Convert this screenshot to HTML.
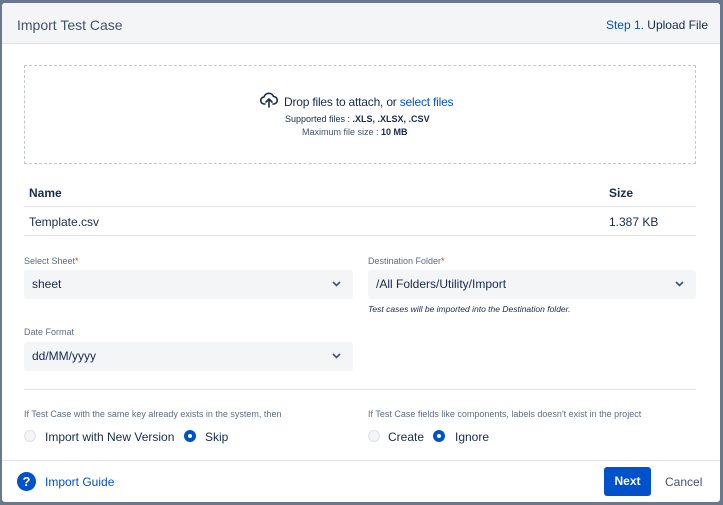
<!DOCTYPE html>
<html><head><meta charset="utf-8"><style>
*{margin:0;padding:0;box-sizing:border-box}
body{width:723px;height:505px;background:#6b778c;font-family:"Liberation Sans",sans-serif;color:#172b4d;position:relative;overflow:hidden}
.m{position:absolute;left:2px;top:3px;width:718px;height:499px;background:#fff;border-radius:3px;overflow:hidden}
.a{position:absolute;white-space:nowrap}
.hd{position:absolute;left:0;top:0;width:718px;height:41px;background:#f4f5f7;border-bottom:1px solid #dfe1e6}
.sel{position:absolute;height:29px;background:#f4f5f7;border-radius:3px;font-size:12px;line-height:29px;padding-left:8px;color:#172b4d}
.sel svg{position:absolute;right:12px;top:11px}
.lbl{font-size:9px;color:#5e6c84}
.r{position:absolute;width:12px;height:12px;border-radius:50%}
.ro{border:1.5px solid #dfe1e6;background:#f4f5f7}
.rs{background:#0052cc}
.rs:after{content:"";position:absolute;left:4px;top:4px;width:4px;height:4px;border-radius:50%;background:#fff}
</style></head><body>
<div class="m">
<div class="hd"></div>
<div class="a" style="left:15px;top:14px;font-size:14px;color:#42526e">Import Test Case</div>
<div class="a" style="right:12px;top:15px;font-size:12px;color:#172b4d"><span style="color:#0052cc">Step 1.</span> Upload File</div>
<div style="position:absolute;left:22px;top:62px;width:672px;height:99px;border:1px dashed #c1c7d0"></div>
<svg class="a" style="left:258px;top:89px" width="18" height="16" viewBox="0 0 18 16"><path d="M5 12H4.5a3.5 3.5 0 0 1-.5-7A5 5 0 0 1 13.5 4.5 3.5 3.5 0 0 1 13.5 12H13M9 15V7M6 10l3-3 3 3" fill="none" stroke="#172b4d" stroke-width="1.6" stroke-linecap="round" stroke-linejoin="round"/></svg>
<div class="a" style="left:282px;top:92px;font-size:12px;color:#172b4d;letter-spacing:-0.2px">Drop files to attach, or <span style="color:#0052cc">select files</span></div>
<div class="a" style="left:283px;top:111px;font-size:9px;color:#172b4d">Supported files : <b>.XLS, .XLSX, .CSV</b></div>
<div class="a" style="left:300px;top:124px;font-size:9px;color:#42526e">Maximum file size : <b style="color:#172b4d">10 MB</b></div>
<div class="a" style="left:27px;top:183px;font-size:12px;font-weight:bold">Name</div>
<div class="a" style="left:607px;top:183px;font-size:12px;font-weight:bold">Size</div>
<div style="position:absolute;left:22px;top:203px;width:672px;border-top:1px solid #dfe1e6"></div>
<div class="a" style="left:27px;top:212px;font-size:12px">Template.csv</div>
<div class="a" style="left:607px;top:212px;font-size:12px">1.387 KB</div>
<div style="position:absolute;left:22px;top:232px;width:672px;border-top:1px solid #dfe1e6"></div>
<div class="a lbl" style="left:22px;top:253px">Select Sheet<span style="color:#de350b">*</span></div>
<div class="a lbl" style="left:366px;top:253px">Destination Folder<span style="color:#de350b">*</span></div>
<div class="sel" style="left:22px;top:267px;width:329px">sheet<svg width="9" height="6"><path d="M1 1l3.5 3.5L8 1" fill="none" stroke="#42526e" stroke-width="1.6"/></svg></div>
<div class="sel" style="left:366px;top:267px;width:328px">/All Folders/Utility/Import<svg width="9" height="6"><path d="M1 1l3.5 3.5L8 1" fill="none" stroke="#42526e" stroke-width="1.6"/></svg></div>
<div class="a" style="left:366px;top:301px;font-size:8.5px;font-style:italic;color:#172b4d">Test cases will be imported into the Destination folder.</div>
<div class="a lbl" style="left:22px;top:324px">Date Format</div>
<div class="sel" style="left:22px;top:339px;width:329px">dd/MM/yyyy<svg width="9" height="6"><path d="M1 1l3.5 3.5L8 1" fill="none" stroke="#42526e" stroke-width="1.6"/></svg></div>
<div style="position:absolute;left:22px;top:386px;width:672px;border-top:1px solid #dfe1e6"></div>
<div class="a lbl" style="left:22px;top:406px">If Test Case with the same key already exists in the system, then</div>
<div class="a lbl" style="left:366px;top:406px">If Test Case fields like components, labels doesn't exist in the project</div>
<div class="r ro" style="left:22px;top:427px"></div>
<div class="a" style="left:43px;top:427px;font-size:12px">Import with New Version</div>
<div class="r rs" style="left:182px;top:427px"></div>
<div class="a" style="left:203px;top:427px;font-size:12px">Skip</div>
<div class="r ro" style="left:366px;top:427px"></div>
<div class="a" style="left:386px;top:427px;font-size:12px">Create</div>
<div class="r rs" style="left:431px;top:427px"></div>
<div class="a" style="left:453px;top:427px;font-size:12px">Ignore</div>
<div style="position:absolute;left:0;top:457px;width:718px;border-top:1px solid #dfe1e6"></div>
<div class="a" style="left:15px;top:469px;width:19px;height:19px;border-radius:50%;background:#0052cc;color:#fff;font-weight:bold;font-size:13px;text-align:center;line-height:19px">?</div>
<div class="a" style="left:43px;top:472px;font-size:12px;color:#0052cc">Import Guide</div>
<div class="a" style="left:602px;top:464px;width:47px;height:29px;background:#0052cc;border-radius:3px;color:#fff;font-weight:bold;font-size:12px;text-align:center;line-height:29px">Next</div>
<div class="a" style="left:663px;top:472px;font-size:12px;color:#42526e">Cancel</div>
</div>
</body></html>
